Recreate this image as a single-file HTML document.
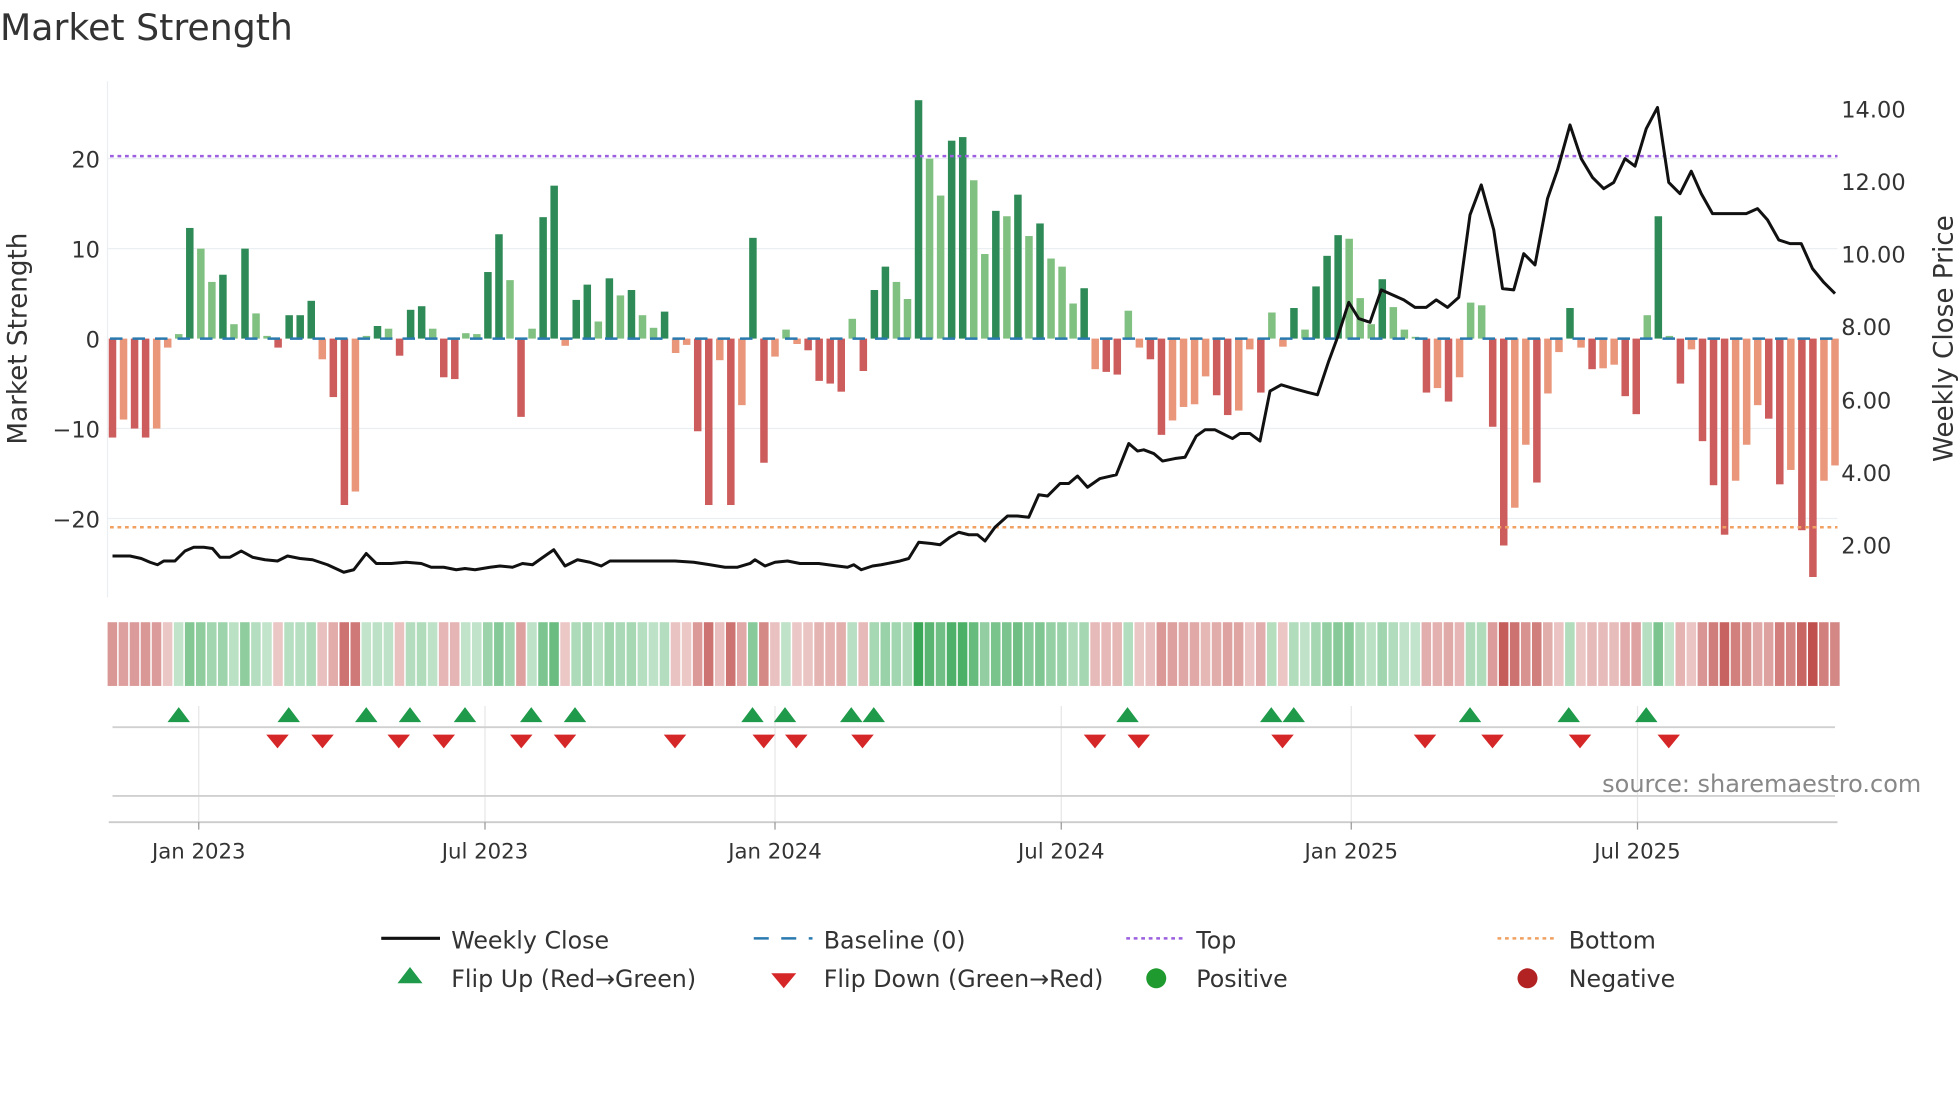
<!DOCTYPE html>
<html><head><meta charset="utf-8"><style>html,body{margin:0;padding:0;background:#fff;}svg{display:block}</style></head>
<body>
<svg id="s" width="1960" height="1102" viewBox="0 0 1568 882" preserveAspectRatio="none" xmlns="http://www.w3.org/2000/svg" font-family="DejaVu Sans, Liberation Sans, sans-serif">
<rect width="1568" height="882" fill="#fff"/>
<text x="0" y="32" font-size="29" fill="#333">Market Strength</text>
<g stroke="#eceff1" stroke-width="1">
<line x1="86" y1="127" x2="1470" y2="127"/><line x1="86" y1="199" x2="1470" y2="199"/>
<line x1="86" y1="343" x2="1470" y2="343"/><line x1="86" y1="415" x2="1470" y2="415"/>
<line x1="86" y1="65" x2="86" y2="478"/>
</g>
<g font-size="18" fill="#333" text-anchor="end">
<text x="80" y="134">20</text><text x="80" y="206">10</text><text x="80" y="278">0</text>
<text x="80" y="350">−10</text><text x="80" y="422">−20</text>
</g>
<g font-size="18" fill="#333">
<text x="1473" y="94">14.00</text><text x="1473" y="152">12.00</text><text x="1473" y="210">10.00</text>
<text x="1473" y="268">8.00</text><text x="1473" y="327">6.00</text><text x="1473" y="385">4.00</text><text x="1473" y="443">2.00</text>
</g>
<text transform="translate(21,271) rotate(-90)" font-size="21" fill="#333" text-anchor="middle">Market Strength</text>
<text transform="translate(1562,271) rotate(-90)" font-size="21" fill="#333" text-anchor="middle">Weekly Close Price</text>
<g id="bars"></g>
<line x1="88" y1="271" x2="1470" y2="271" stroke="#2a7ab0" stroke-width="2" stroke-dasharray="10,8"/>
<line x1="88" y1="125" x2="1470" y2="125" stroke="#9b5fe0" stroke-width="2" stroke-dasharray="3,3"/>
<line x1="88" y1="422" x2="1470" y2="422" stroke="#f0a060" stroke-width="2" stroke-dasharray="3,3"/>
<polyline id="pl" fill="none" stroke="#111" stroke-width="2.4" stroke-linejoin="round"/>
<g id="strip"></g>
<g stroke="#e6e6e6" stroke-width="1">
<line x1="159" y1="565" x2="159" y2="660"/><line x1="388" y1="565" x2="388" y2="660"/><line x1="620" y1="565" x2="620" y2="660"/>
<line x1="849" y1="565" x2="849" y2="660"/><line x1="1081" y1="565" x2="1081" y2="660"/><line x1="1310" y1="565" x2="1310" y2="660"/>
</g>
<line x1="90" y1="582" x2="1468" y2="582" stroke="#d0d0d0" stroke-width="1.5"/>
<line x1="90" y1="637" x2="1468" y2="637" stroke="#d0d0d0" stroke-width="1.5"/>
<line x1="87" y1="658" x2="1470" y2="658" stroke="#ccc" stroke-width="1.5"/>
<g id="mk"></g>
<text x="1537" y="634" font-size="19.2" fill="#888" text-anchor="end">source: sharemaestro.com</text>
<g stroke="#999"><line x1="159" y1="658" x2="159" y2="664"/><line x1="388" y1="658" x2="388" y2="664"/><line x1="620" y1="658" x2="620" y2="664"/><line x1="849" y1="658" x2="849" y2="664"/><line x1="1081" y1="658" x2="1081" y2="664"/><line x1="1310" y1="658" x2="1310" y2="664"/></g>
<g font-size="17" fill="#333" text-anchor="middle">
<text x="159" y="687">Jan 2023</text><text x="388" y="687">Jul 2023</text><text x="620" y="687">Jan 2024</text>
<text x="849" y="687">Jul 2024</text><text x="1081" y="687">Jan 2025</text><text x="1310" y="687">Jul 2025</text>
</g>
<g font-size="19" fill="#333">
<line x1="305" y1="751" x2="352" y2="751" stroke="#111" stroke-width="2.5"/><text x="361" y="759">Weekly Close</text>
<line x1="603" y1="751" x2="650" y2="751" stroke="#2a7ab0" stroke-width="2" stroke-dasharray="12,10"/><text x="659" y="759">Baseline (0)</text>
<line x1="901" y1="751" x2="948" y2="751" stroke="#9b5fe0" stroke-width="2" stroke-dasharray="3,3"/><text x="957" y="759">Top</text>
<line x1="1198" y1="751" x2="1245" y2="751" stroke="#f0a060" stroke-width="2" stroke-dasharray="3,3"/><text x="1255" y="759">Bottom</text>
<polygon points="328,774 338,787 318,787" fill="#1f9a4a"/><text x="361" y="790">Flip Up (Red→Green)</text>
<polygon points="617,779 637,779 627,791" fill="#d62728"/><text x="659" y="790">Flip Down (Green→Red)</text>
<circle cx="925" cy="783" r="8" fill="#1f9a2f"/><text x="957" y="790">Positive</text>
<circle cx="1222" cy="783" r="8" fill="#b22222"/><text x="1255" y="790">Negative</text>
</g>
</svg>
<script>
var V=[-11,-9,-10,-11,-10,-1,0.5,12.3,10,6.3,7.1,1.6,10,2.8,0.3,-1,2.6,2.6,4.2,-2.3,-6.5,-18.5,-17,0.3,1.4,1.1,-1.9,3.2,3.6,1.1,-4.3,-4.5,0.6,0.5,7.4,11.6,6.5,-8.7,1.1,13.5,17,-0.8,4.3,6,1.9,6.7,4.8,5.4,2.6,1.2,3,-1.6,-0.7,-10.3,-18.5,-2.4,-18.5,-7.4,11.2,-13.8,-2,1,-0.6,-1.3,-4.7,-5,-5.9,2.2,-3.6,5.4,8,6.3,4.4,26.5,20,15.9,22,22.4,17.6,9.4,14.2,13.6,16,11.4,12.8,8.9,8,3.9,5.6,-3.4,-3.7,-4,3.1,-1,-2.3,-10.7,-9.1,-7.6,-7.3,-4.2,-6.3,-8.5,-8,-1.2,-6,2.9,-0.9,3.4,1,5.8,9.2,11.5,11.1,4.5,1.6,6.6,3.5,1,0.2,-6,-5.5,-7,-4.3,4,3.7,-9.8,-23,-18.8,-11.8,-16,-6.1,-1.5,3.4,-1,-3.4,-3.3,-2.9,-6.4,-8.4,2.6,13.6,0.3,-5,-1.2,-11.4,-16.3,-21.8,-15.8,-11.8,-7.4,-8.9,-16.2,-14.6,-21.3,-26.5,-15.8,-14.1];
var n=V.length,x0=90,x1=1468,st=(x1-x0)/(n-1),ns="http://www.w3.org/2000/svg";
function el(t,a,p){var e=document.createElementNS(ns,t);for(var k in a)e.setAttribute(k,a[k]);p.appendChild(e);return e;}
var B=document.getElementById('bars'),S=document.getElementById('strip');
function mix(c,t){return 'rgb('+c.map(function(v){return Math.round(255+(v-255)*t)}).join(',')+')';}
for(var i=0;i<n;i++){var v=V[i],x=x0+i*st,dark=i==0||Math.abs(v)>=Math.abs(V[i-1]);
var col=v>=0?(dark?'#2e8b57':'#80c080'):(dark?'#cd5c5c':'#e9967a');
var h=Math.abs(v)*7.2;el('rect',{x:x-3,y:v>=0?271-h:271,width:6,height:Math.max(h,1),fill:col},B);
var t=Math.min(1,0.3+Math.abs(v)/26*0.7);
var c=v>=0?mix([58,167,87],t):mix([192,80,77],t);
el('rect',{x:x-st/2+0.5,y:498,width:st-1.2,height:51,fill:c},S);}
var P=[[90,445],[104,445],[113,447],[120,450],[126,452],[131,449],[140,449],[148,441],[155,438],[163,438],[170,439],[176,446],[184,446],[193,441],[202,446],[212,448],[222,449],[230,445],[240,447],[250,448],[262,452],[275,458],[283,456],[293,443],[301,451],[313,451],[325,450],[337,451],[345,454],[355,454],[365,456],[372,455],[380,456],[392,454],[400,453],[410,454],[418,451],[426,452],[433,447],[443,440],[452,453],[462,448],[472,450],[481,453],[488,449],[500,449],[520,449],[540,449],[555,450],[568,452],[580,454],[590,454],[600,451],[604,448],[612,453],[620,450],[630,449],[640,451],[655,451],[670,453],[678,454],[683,452],[689,456],[698,453],[705,452],[720,449],[727,447],[735,434],[745,435],[752,436],[760,430],[767,426],[775,428],[782,428],[788,433],[796,422],[806,413],[814,413],[823,414],[831,396],[838,397],[848,387],[855,387],[862,381],[870,390],[880,383],[893,380],[903,355],[910,361],[915,360],[923,363],[930,369],[940,367],[948,366],[957,349],[964,344],[972,344],[978,347],[986,351],[992,347],[1000,347],[1008,353],[1016,313],[1025,308],[1035,311],[1046,314],[1054,316],[1063,289],[1070,270],[1079,242],[1087,255],[1096,258],[1105,232],[1114,236],[1123,240],[1132,246],[1141,246],[1149,240],[1158,246],[1167,238],[1176,172],[1185,148],[1195,184],[1202,231],[1211,232],[1219,203],[1228,212],[1238,159],[1246,136],[1256,100],[1265,127],[1274,142],[1283,151],[1291,146],[1300,127],[1308,133],[1317,103],[1326,86],[1335,146],[1344,155],[1353,137],[1361,155],[1370,171],[1379,171],[1388,171],[1397,171],[1406,167],[1414,176],[1423,192],[1432,195],[1441,195],[1450,215],[1459,226],[1468,235]];
document.getElementById('pl').setAttribute('points',P.map(function(p){return p.join(',')}).join(' '));
var M=document.getElementById('mk');
[143,231,293,328,372,425,460,602,628,681,699,902,1017,1035,1176,1255,1317].forEach(function(x){el('polygon',{points:(x)+',566 '+(x+9)+',578 '+(x-9)+',578',fill:'#1f9a4a'},M);});
[222,258,319,355,417,452,540,611,637,690,876,911,1026,1140,1194,1264,1335].forEach(function(x){el('polygon',{points:(x-9)+',588 '+(x+9)+',588 '+x+',599',fill:'#d62728'},M);});
</script>
</body></html>
